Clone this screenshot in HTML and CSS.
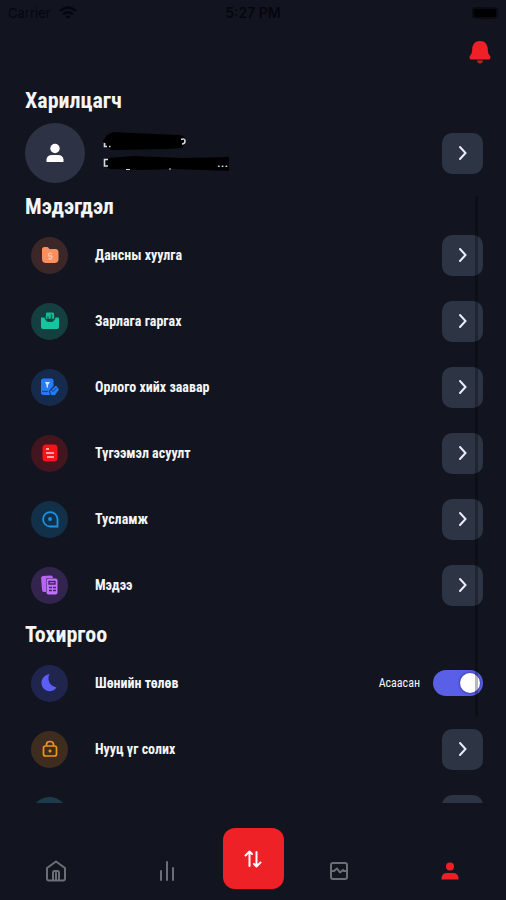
FILE: index.html
```html
<!DOCTYPE html>
<html lang="mn">
<head>
<meta charset="utf-8">
<meta name="viewport" content="width=device-width, initial-scale=1">
<title>Тохиргоо</title>
<link rel="stylesheet" href="styles.css">
</head>
<body>
<div class="app">
  <div class="status">
    <span class="carrier">Carrier
      <svg width="18" height="14" viewBox="0 0 18 14" fill="none" stroke="currentColor" stroke-width="2.6"><path d="M1 5Q9-2 17 5M4 8.500Q9 4 14 8.500"/><path d="M6.500 10.500Q9 8.500 11.500 10.500L9 13Z" fill="currentColor" stroke="none"/></svg>
    </span>
    <span class="time">5:27 PM</span>
    <span class="battery"><i></i></span>
  </div>
  <header class="top">
    <button class="bell" aria-label="Notifications">
      <svg width="22" height="24" viewBox="0 0 22 24" fill="currentColor"><path d="M11 1C6 1 3.500 4.500 3.200 9C3 13 2.500 14 1.200 15.500C0 17 .5 19.500 2.500 19.500H19.500C21.500 19.500 22 17 20.800 15.500C19.500 14 19 13 18.800 9C18.500 4.500 16 1 11 1Z"/><path d="M8 20.500H14Q13.500 23.500 11 23.500T8 20.500Z" opacity=".8"/></svg>
    </button>
  </header>

  <main class="content">
    <section>
      <h2>Харилцагч</h2>
      <div class="profile">
        <div class="avatar">
          <svg width="18" height="20" viewBox="0 0 18 20" fill="#fff"><circle cx="9" cy="5.500" r="4.700"/><path d="M.5 19V16.500Q1 12 6 12H12Q17 12 17.500 16.500V19Z"/></svg>
        </div>
        <div class="redacted">
          <svg width="128" height="42" viewBox="0 0 128 42">
            <path d="M4 3L10 0L28 1L76 3Q83 4 82 8L80 16L65 17L10 18Q3 17 4 12L0 9Z" fill="#000"/>
            <path d="M6 26L30 24L80 26L126 25V39L100 38L70 37L40 38L8 37Q0 35 2 30Z" fill="#000"/>
            <g fill="none" stroke="#d6d9e0" stroke-width="1.600"><path d="M1.500 11V14.500H4M6 14.500H7.500M78 7.500Q82 6 82 9T79 12M5 27.500H1.500V34H5"/><path d="M23 37.500H27M66 37H68" stroke-width="1"/></g>
          </svg>
          <span class="dots">...</span>
        </div>
        <button class="go" aria-label="Харилцагч"><svg width="10" height="16" viewBox="0 0 10 16"><path d="M2 2L7.500 8L2 14"/></svg></button>
      </div>
    </section>

    <section>
      <h2>Мэдэгдэл</h2>
      <ul class="list">
        <li>
          <span class="icon orange"><svg width="20" height="20" viewBox="0 0 20 20"><path d="M2 4.500Q2 2 4.500 2H7Q8 2 8.700 3L9.500 4H15.500Q18.500 4 18.500 7.500V14Q18.500 18 14.500 18H6Q2 18 2 14Z" fill="#fa8f62"/><path d="M12 8.500Q8.500 7.500 8.500 9.500T10.500 11T11.500 13T8.500 13" fill="none" stroke="#ffc8a9" stroke-width="1.300"/></svg></span>
          <span class="label">Дансны хуулга</span>
          <button class="go" aria-label="Дансны хуулга"><svg width="10" height="16" viewBox="0 0 10 16"><path d="M2 2L7.500 8L2 14"/></svg></button>
        </li>
        <li>
          <span class="icon green"><svg width="20" height="20" viewBox="0 0 20 20"><path d="M5.500 8L6 2.500Q6 1.500 7 1.500H13Q14 1.500 14 2.500L14.500 8Z" fill="#13b894"/><path d="M1 6.500H4.500Q6 11 10 11T15.500 6.500H18Q19 6.500 19 7.500V16Q19 18 17 18H3Q1 18 1 16Z" fill="#12c7a0"/><path d="M5 6Q6 10.500 10 10.500T15 6M8 5.500V8M11.500 3.500V8H9.500" fill="none" stroke="#145349" stroke-width="1.200"/></svg></span>
          <span class="label">Зарлага гаргах</span>
          <button class="go" aria-label="Зарлага гаргах"><svg width="10" height="16" viewBox="0 0 10 16"><path d="M2 2L7.500 8L2 14"/></svg></button>
        </li>
        <li>
          <span class="icon blue"><svg width="20" height="20" viewBox="0 0 20 20"><path d="M1 4Q1 1.500 3.500 1.500H11Q13.500 1.500 13.500 4V9L9 14L10 18H3.500Q1 18 1 15.500Z" fill="#287af5"/><path d="M5 5H10L8 8V11L6.500 10V8Z" fill="#d3e5ff"/><path d="M2 14.500H8" stroke="#174894" stroke-width="1.200"/><path d="M16 8.500L19 12.500L15 18H11L10 14Z" fill="#247df0"/><path d="M10.500 12L13 14.500L16.500 11" fill="none" stroke="#15386f"/></svg></span>
          <span class="label">Орлого хийх заавар</span>
          <button class="go" aria-label="Орлого хийх заавар"><svg width="10" height="16" viewBox="0 0 10 16"><path d="M2 2L7.500 8L2 14"/></svg></button>
        </li>
        <li>
          <span class="icon red"><svg width="20" height="20" viewBox="0 0 20 20"><rect x="2.500" y="1.500" width="15" height="17" rx="3.500" fill="#fb1219"/><path d="M6 6H9M6 10H14M7 14H14" stroke="#ffd1d1" stroke-width="1.700"/></svg></span>
          <span class="label">Түгээмэл асуулт</span>
          <button class="go" aria-label="Түгээмэл асуулт"><svg width="10" height="16" viewBox="0 0 10 16"><path d="M2 2L7.500 8L2 14"/></svg></button>
        </li>
        <li>
          <span class="icon sky"><svg width="20" height="20" viewBox="0 0 20 20" fill="none" stroke="#1b91e6" stroke-width="1.800"><path d="M17.500 17.500H10A7.200 7.200 0 1 1 17.500 10Z"/><circle cx="10" cy="10" r="1" fill="#1b91e6"/></svg></span>
          <span class="label">Тусламж</span>
          <button class="go" aria-label="Тусламж"><svg width="10" height="16" viewBox="0 0 10 16"><path d="M2 2L7.500 8L2 14"/></svg></button>
        </li>
        <li>
          <span class="icon purple"><svg width="20" height="20" viewBox="0 0 20 20"><path d="M1 2.500L2.500 1L11 .5Q13 .5 13 3H8Q6 3 6 5V17H4Q2 17 2 15Z" fill="#b764f4"/><rect x="6.500" y="3.500" width="11" height="16" rx="2" fill="#c070fa"/><path d="M9 6.500H15V9H9ZM9 12.500H12M13 12.500H16M9 15.500H12M13 15.500H16" fill="none" stroke="#45246c" stroke-width="1.400"/></svg></span>
          <span class="label">Мэдээ</span>
          <button class="go" aria-label="Мэдээ"><svg width="10" height="16" viewBox="0 0 10 16"><path d="M2 2L7.500 8L2 14"/></svg></button>
        </li>
      </ul>
    </section>

    <section>
      <h2>Тохиргоо</h2>
      <ul class="list">
        <li>
          <span class="icon indigo"><svg width="20" height="20" viewBox="0 0 20 20"><path d="M9.500 1C7 6 9 13 16.500 14.500C13 20 5 19 2.500 14C-.5 8 3.500 2 9.500 1Z" fill="#5b5df6"/></svg></span>
          <label class="label" for="night">Шөнийн төлөв</label>
          <span class="state">Асаасан</span>
          <input class="switch" id="night" type="checkbox" role="switch" checked>
        </li>
        <li>
          <span class="icon amber"><svg width="20" height="20" viewBox="0 0 20 20" fill="none" stroke="#f39318" stroke-width="1.700"><path d="M6.500 7V5.500Q6.500 2.500 10 2.500T13.500 5.500V7"/><rect x="3.500" y="7" width="13" height="10" rx="2"/><path d="M8.500 12H11.500M10 10.500V13.500"/></svg></span>
          <span class="label">Нууц үг солих</span>
          <button class="go" aria-label="Нууц үг солих"><svg width="10" height="16" viewBox="0 0 10 16"><path d="M2 2L7.500 8L2 14"/></svg></button>
        </li>
        <li>
          <span class="icon teal"></span>
          <span class="label"></span>
          <button class="go" aria-label="Дэлгэрэнгүй"></button>
        </li>
      </ul>
    </section>
    <div class="thumb"></div>
  </main>

  <nav class="tabs">
    <a href="#home" aria-label="Home"><svg width="20" height="22" viewBox="0 0 20 22"><path d="M1 8L10 1.500L19 8V18.500Q19 20.500 17 20.500H3Q1 20.500 1 18.500ZM7 20V12.500Q7 11 8.500 11H11.500Q13 11 13 12.500V20M10 13V20"/></svg></a>
    <a href="#stats" aria-label="Statistics"><svg width="20" height="22" viewBox="0 0 20 22"><path d="M4 11V20M10 2V20M16 8V20"/></svg></a>
    <a class="swap" href="#trade" aria-label="Trade"><svg width="20" height="20" viewBox="0 0 20 20"><path d="M6.500 17V3M2.500 6.500L6.500 2.500L9 5M13.500 3V17M17.500 13.500L13.500 17.500L11 15"/></svg></a>
    <a href="#chart" aria-label="Chart"><svg width="20" height="22" viewBox="0 0 20 22"><rect x="2" y="3" width="16" height="16" rx="2"/><path d="M3 11H5L8 8.500L11 12.500L14 10L15 11H17"/></svg></a>
    <a class="active" href="#profile" aria-label="Profile"><svg width="20" height="22" viewBox="0 0 20 22"><circle cx="10" cy="6.500" r="4"/><path d="M1.500 19.500V18Q2 13 7 13H13Q18 13 18.500 18V19.500Z"/></svg></a>
  </nav>
</div>
</body>
</html>
```

FILE: styles.css
```css
* { box-sizing: border-box; }

body {
  margin: 0;
  background: #12151f;
  color: #f4f5f7;
  font-family: "Roboto Condensed", "Liberation Sans Narrow", Roboto, sans-serif;
}

button { border: 0; padding: 0; cursor: pointer; }

.app {
  display: flex;
  flex-direction: column;
  height: 100vh;
}

.status {
  display: grid;
  grid-template-columns: 1fr auto 1fr;
  align-items: center;
  height: 26px;
  padding: 0 8px;
  color: #05070d;
  font: 13px/16px Inter, sans-serif;
}
.carrier { display: flex; gap: 8px; align-items: center; }
.time { font-size: 14px; font-weight: 600; }
.battery { justify-self: end; padding: 2px; border-radius: 4px; background: #0a0c13; }
.battery i { display: block; width: 22px; height: 8px; border-radius: 2px; background: #000; }

.top {
  display: flex;
  justify-content: flex-end;
  padding: 14px 15px 0;
}
.bell { display: flex; background: none; color: #f02027; }

.content {
  position: relative;
  flex: 1;
  min-height: 0;
  overflow: hidden;
  padding: 24px 23px 0 25px;
}

h2 {
  margin: 0;
  font-size: 22px;
  line-height: 26px;
  font-weight: 700;
}

.profile {
  display: flex;
  align-items: center;
  gap: 18px;
  margin: 9px 0 11px;
}
.avatar {
  display: grid;
  place-items: center;
  width: 60px;
  height: 60px;
  border-radius: 50%;
  background: #2d3344;
}
.redacted { position: relative; flex: 1; }
.redacted svg { display: block; }
.dots {
  position: absolute;
  left: 114px;
  top: 22px;
  font-size: 14px;
  line-height: 16px;
}

.go {
  display: grid;
  place-items: center;
  width: 41px;
  height: 41px;
  border-radius: 10px;
  background: #2d3444;
}
.go path {
  fill: none;
  stroke: #e8edfb;
  stroke-width: 2;
  stroke-linecap: round;
}

.list { margin: 0; padding: 2px 0 4px; list-style: none; }
.list li {
  display: flex;
  align-items: center;
  height: 66px;
  padding-left: 6px;
}
.icon {
  display: grid;
  place-items: center;
  width: 37px;
  height: 37px;
  border-radius: 50%;
}
.label {
  flex: 1;
  padding-left: 27px;
  font-size: 14px;
  line-height: 18px;
  font-weight: 700;
}
.state { margin-right: 13px; font-size: 12px; line-height: 16px; }

.orange { background: #3b2727; }
.green { background: #153e40; }
.blue { background: #162b4c; }
.red { background: #42151f; }
.sky { background: #133049; }
.purple { background: #33244d; }
.indigo { background: #20254d; }
.amber { background: #3e2d1f; }
.teal { background: #1e3b4b; }

.switch {
  appearance: none;
  display: flex;
  justify-content: flex-end;
  width: 50px;
  height: 26px;
  margin: 0;
  padding: 3px;
  border-radius: 13px;
  background: #5a5fe8;
}
.switch::before {
  content: "";
  width: 20px;
  height: 20px;
  border-radius: 50%;
  background: #fff;
  box-shadow: 0 0 2px 1px #4145b8;
}
.switch:not(:checked) { justify-content: flex-start; background: #2d3444; }

.thumb {
  position: absolute;
  top: 132px;
  bottom: 86px;
  right: 28px;
  width: 3px;
  border-radius: 2px;
  background: rgba(0, 0, 0, .28);
}

.tabs {
  display: grid;
  grid-template-columns: 1fr 1fr auto 1fr 1fr;
  align-items: center;
  justify-items: center;
  height: 97px;
  padding-top: 38px;
}
.tabs a { display: grid; place-items: center; color: #6c6e76; }
.tabs svg {
  fill: none;
  stroke: currentColor;
  stroke-width: 2;
  stroke-linecap: round;
  stroke-linejoin: round;
}
.tabs .active { color: #ee2027; }
.tabs .active svg { fill: currentColor; stroke: none; }
.tabs .swap {
  width: 61px;
  height: 61px;
  margin-top: -24px;
  border-radius: 12px;
  background: #ee2127;
  color: #fff;
}
```
